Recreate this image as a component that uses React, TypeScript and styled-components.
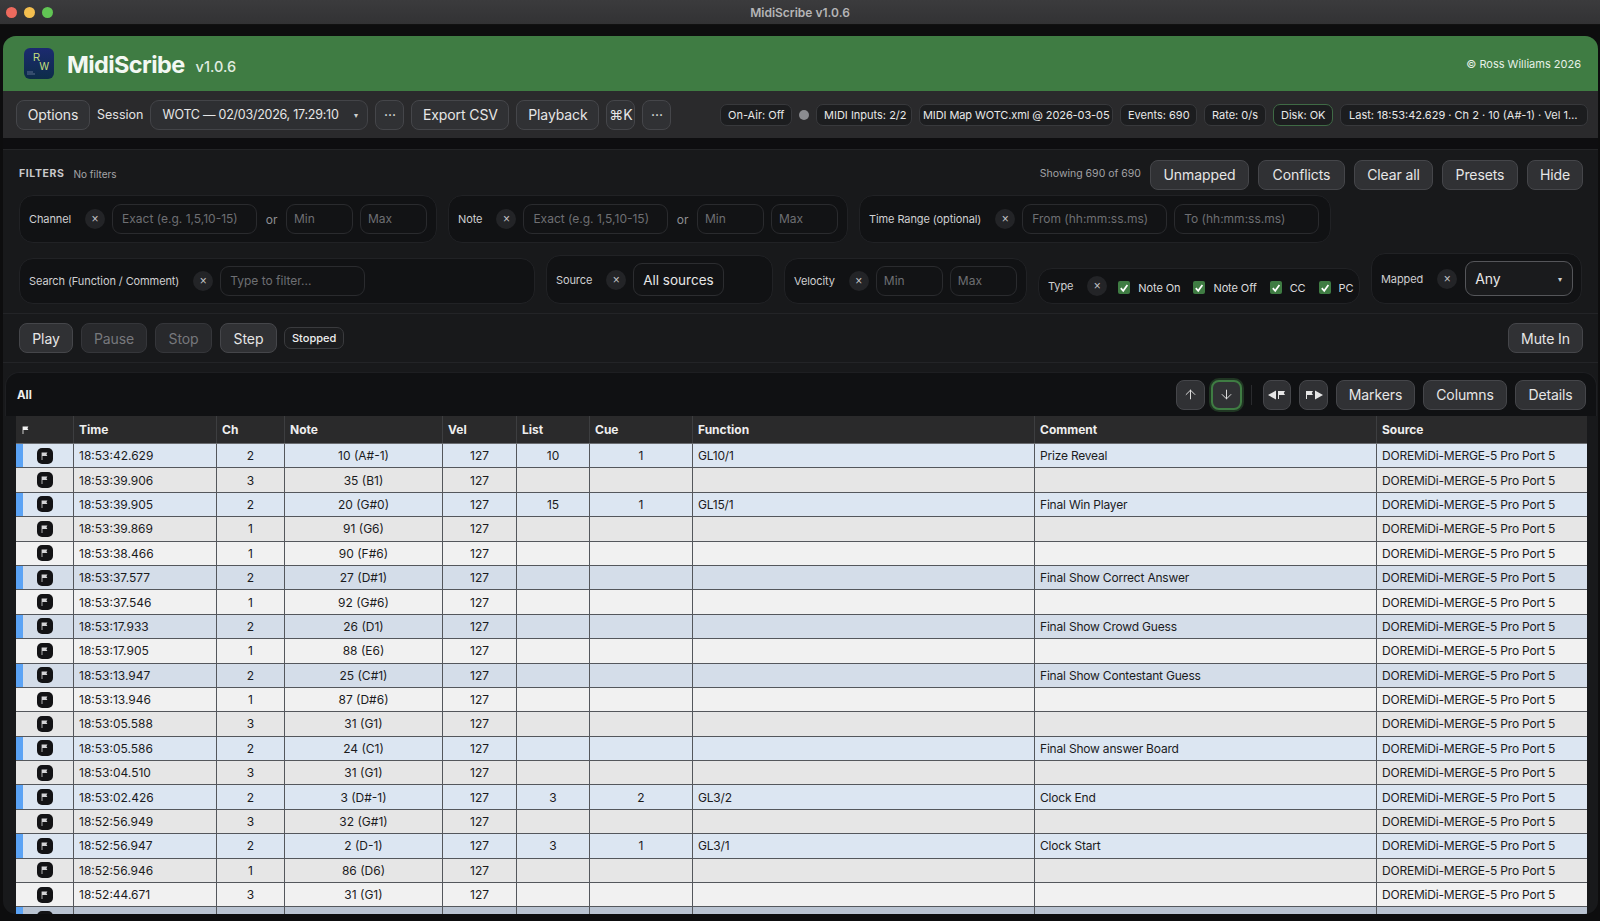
import { ArrowDown, ArrowUp } from "lucide-react";
import styled, { createGlobalStyle } from "styled-components";

type Tone = "blue" | "deep" | "grey" | "light" | "dim";

interface MidiRow {
  time: string;
  ch: number;
  note: string;
  list?: number;
  cue?: number;
  fn?: string;
  comment?: string;
  tone: Tone;
  mapped?: boolean;
}

const rows: MidiRow[] = [
  { time: "18:53:42.629", ch: 2, note: "10 (A#-1)", list: 10, cue: 1, fn: "GL10/1", comment: "Prize Reveal", tone: "blue", mapped: true },
  { time: "18:53:39.906", ch: 3, note: "35 (B1)", tone: "grey" },
  { time: "18:53:39.905", ch: 2, note: "20 (G#0)", list: 15, cue: 1, fn: "GL15/1", comment: "Final Win Player", tone: "blue", mapped: true },
  { time: "18:53:39.869", ch: 1, note: "91 (G6)", tone: "grey" },
  { time: "18:53:38.466", ch: 1, note: "90 (F#6)", tone: "light" },
  { time: "18:53:37.577", ch: 2, note: "27 (D#1)", comment: "Final Show Correct Answer", tone: "deep", mapped: true },
  { time: "18:53:37.546", ch: 1, note: "92 (G#6)", tone: "light" },
  { time: "18:53:17.933", ch: 2, note: "26 (D1)", comment: "Final Show Crowd Guess", tone: "deep", mapped: true },
  { time: "18:53:17.905", ch: 1, note: "88 (E6)", tone: "light" },
  { time: "18:53:13.947", ch: 2, note: "25 (C#1)", comment: "Final Show Contestant Guess", tone: "deep", mapped: true },
  { time: "18:53:13.946", ch: 1, note: "87 (D#6)", tone: "light" },
  { time: "18:53:05.588", ch: 3, note: "31 (G1)", tone: "grey" },
  { time: "18:53:05.586", ch: 2, note: "24 (C1)", comment: "Final Show answer Board", tone: "blue", mapped: true },
  { time: "18:53:04.510", ch: 3, note: "31 (G1)", tone: "grey" },
  { time: "18:53:02.426", ch: 2, note: "3 (D#-1)", list: 3, cue: 2, fn: "GL3/2", comment: "Clock End", tone: "blue", mapped: true },
  { time: "18:52:56.949", ch: 3, note: "32 (G#1)", tone: "grey" },
  { time: "18:52:56.947", ch: 2, note: "2 (D-1)", list: 3, cue: 1, fn: "GL3/1", comment: "Clock Start", tone: "blue", mapped: true },
  { time: "18:52:56.946", ch: 1, note: "86 (D6)", tone: "grey" },
  { time: "18:52:44.671", ch: 3, note: "31 (G1)", tone: "light" },
];

const toneColors: Record<Tone, string> = {
  blue: "#dce6f2",
  deep: "#d4dde9",
  grey: "#e6e6e6",
  light: "#f1f1f1",
  dim: "#b9c3d1",
};

const GlobalStyle = createGlobalStyle`
  html, body {
    margin: 0;
    padding: 0;
    background: #0d0d0e;
  }
  * {
    box-sizing: border-box;
  }
  body {
    font-family: Inter, "Liberation Sans", sans-serif;
    color: #e8e8e8;
  }
`;

const Window = styled.div`
  width: 1600px;
  height: 921px;
  overflow: hidden;
  display: flex;
  flex-direction: column;
  background: #0d0d0e;
`;

const TitleBar = styled.div`
  height: 25px;
  flex: none;
  display: flex;
  align-items: center;
  padding-left: 6px;
  background: linear-gradient(#3b3b3d, #323234);
  border-bottom: 1px solid #111;
`;

const Lights = styled.div`
  display: flex;
  gap: 7px;
  width: 52px;
`;

const Light = styled.span<{ $color: string }>`
  width: 11px;
  height: 11px;
  border-radius: 50%;
  background: ${(p) => p.$color};
`;

const WindowTitle = styled.div`
  flex: 1;
  margin-right: 58px;
  text-align: center;
  font-size: 12px;
  font-weight: 600;
  color: #b4b4b6;
`;

const Shell = styled.div`
  margin: 11px 2px 7px 3px;
  flex: 1;
  min-height: 0;
  display: flex;
  flex-direction: column;
  border-radius: 13px;
  overflow: hidden;
  background: #18191b;
`;

const Brand = styled.header`
  height: 55px;
  flex: none;
  display: flex;
  align-items: center;
  padding: 0 17px 0 21px;
  background: #3f7c43;
`;

const BrandName = styled.h1`
  margin: 2px 0 0 13px;
  font-size: 23.5px;
  font-weight: 700;
  letter-spacing: -0.6px;
  color: #f3f8f3;
`;

const BrandVersion = styled.span`
  margin: 5px 0 0 11px;
  font-size: 14.5px;
  font-weight: 500;
  color: #e0ece0;
`;

const Copyright = styled.span`
  margin-left: auto;
  font-size: 11px;
  color: #e6f0e6;
`;

const Toolbar = styled.div`
  height: 47px;
  flex: none;
  display: flex;
  align-items: center;
  gap: 7px;
  padding: 0 10px 0 13px;
  background: #2a2a2c;
`;

const Button = styled.button<{ $w: number; $muted?: boolean }>`
  width: ${(p) => p.$w}px;
  height: 30px;
  flex: none;
  display: inline-flex;
  align-items: center;
  justify-content: center;
  padding: 0;
  border-radius: 8px;
  border: 1px solid ${(p) => (p.$muted ? "#35363a" : "#45464a")};
  background: ${(p) => (p.$muted ? "#28292c" : "#303134")};
  color: ${(p) => (p.$muted ? "#77787c" : "#e6e6e6")};
  font-family: inherit;
  font-size: 14px;
  letter-spacing: -0.1px;
`;

const WatchButton = styled(Button)`
  margin-left: -2px;
  border: 2px solid #3f7c43;
  box-shadow: 0 0 0 2px rgba(63, 124, 67, 0.35);
`;

const SessionLabel = styled.span`
  font-size: 12.5px;
  color: #e2e2e2;
`;

const SelectBox = styled.div<{ $w: number; $h: number; $strong?: boolean }>`
  width: ${(p) => p.$w}px;
  height: ${(p) => p.$h}px;
  flex: none;
  display: flex;
  align-items: center;
  justify-content: space-between;
  margin-left: ${(p) => (p.$strong ? 1 : 0)}px;
  padding: 0 10px 0 9px;
  white-space: nowrap;
  border-radius: 9px;
  border: 1px solid ${(p) => (p.$strong ? "#55565a" : "#2c2d30")};
  background: ${(p) => (p.$strong ? "#1a1b1d" : "#121315")};
  color: #e6e6e6;
  font-size: ${(p) => (p.$strong ? 14 : 13.5)}px;
`;

const SessionSelect = styled(SelectBox)`
  background: #2e2f32;
  border-color: #434448;
  font-size: 12.5px;
  letter-spacing: -0.25px;
  padding-left: 11px;
`;

const Caret = styled.span`
  font-size: 8px;
  color: #cfcfcf;
`;

const Statuses = styled.div`
  margin-left: auto;
  display: flex;
  align-items: center;
  gap: 7px;
`;

const Pill = styled.span<{ $w: number; $ok?: boolean }>`
  width: ${(p) => p.$w}px;
  height: 22px;
  flex: none;
  display: block;
  padding: 0 7px;
  line-height: 20px;
  text-align: center;
  white-space: nowrap;
  overflow: hidden;
  border-radius: 7px;
  border: 1px solid ${(p) => (p.$ok ? "#3f6a45" : "#38393c")};
  background: #1c1d1f;
  font-size: 11px;
  color: #e8e8e8;
`;

const MapPill = styled(Pill)`
  padding: 0 3px;
  text-align: left;
  letter-spacing: -0.1px;
`;

const LastPill = styled(Pill)`
  padding: 0 8px;
  text-overflow: ellipsis;
`;

const StatusDot = styled.span`
  width: 10px;
  height: 10px;
  border-radius: 50%;
  background: #8b8c90;
`;

const Gap = styled.div`
  height: 12px;
  flex: none;
  background: #0e0e10;
  border-bottom: 1px solid #242527;
`;

const Filters = styled.section`
  flex: none;
  padding: 10px 15px 9px 16px;
  border-bottom: 1px solid #232427;
`;

const FilterHead = styled.div`
  display: flex;
  align-items: center;
  gap: 9px;
  height: 29px;
`;

const FilterTitle = styled.span`
  margin-bottom: 2px;
  font-size: 10.5px;
  font-weight: 700;
  letter-spacing: 0.6px;
  color: #c9c9cb;
`;

const FilterNote = styled.span`
  margin-bottom: 2px;
  font-size: 10px;
  color: #a5a5a8;
`;

const Showing = styled.span`
  margin: 0 0 2px auto;
  font-size: 10.5px;
  color: #a2a2a5;
`;

const FilterRow = styled.div`
  display: flex;
  align-items: flex-end;
  gap: 11px;
  margin-top: 6px;
`;

const Group = styled.div<{ $w: number }>`
  width: ${(p) => p.$w}px;
  display: flex;
  align-items: center;
  gap: 7px;
  padding: 8px 9px;
  border-radius: 14px;
  border: 1px solid #212225;
  background: #111214;
`;

const SecondRow = styled(FilterRow)`
  margin-top: 10px;
  ${Group} {
    padding: 7px 9px;
  }
`;

const GroupLabel = styled.span`
  margin-right: 7px;
  white-space: nowrap;
  font-size: 11px;
  letter-spacing: -0.1px;
  color: #cfcfd1;
`;

const Clear = styled.button`
  width: 20px;
  height: 20px;
  flex: none;
  padding: 0;
  border: none;
  border-radius: 50%;
  background: #232427;
  color: #c5c5c7;
  font-size: 12px;
  line-height: 20px;
`;

const Field = styled.input<{ $w: number }>`
  width: ${(p) => p.$w}px;
  height: 30px;
  flex: none;
  padding: 0 9px 2px;
  border-radius: 9px;
  border: 1px solid #2a2b2e;
  background: #121315;
  color: #e6e6e6;
  font-family: inherit;
  font-size: 12px;
  &::placeholder {
    color: #6e6f73;
  }
`;

const RangeField = styled(Field)`
  padding-left: 7px;
`;

const Or = styled.span`
  width: 15px;
  text-align: center;
  font-size: 12px;
  color: #8f8f93;
`;

const CheckItem = styled.label`
  display: flex;
  align-items: center;
  gap: 8px;
  margin: 3px 2px 0 4px;
  white-space: nowrap;
  font-size: 11px;
  letter-spacing: -0.1px;
  color: #dcdcde;
`;

const CheckBox = styled.span`
  width: 12px;
  height: 13px;
  display: flex;
  align-items: center;
  justify-content: center;
  border-radius: 2px;
  background: #3f7c43;
`;

const Transport = styled.div`
  height: 49px;
  flex: none;
  display: flex;
  align-items: center;
  gap: 8px;
  padding: 0 15px 0 16px;
  border-bottom: 1px solid #232427;
`;

const Stopped = styled.span`
  height: 22px;
  padding: 0 7px;
  display: flex;
  align-items: center;
  margin-left: -1px;
  border-radius: 7px;
  border: 1px solid #3a3b3e;
  background: #1c1d1f;
  font-size: 11px;
  font-weight: 500;
  color: #eee;
`;

const MuteButton = styled(Button)`
  margin-left: auto;
`;

const TableBar = styled.div`
  height: 44px;
  flex: none;
  display: flex;
  align-items: center;
  gap: 8px;
  margin: 9px 1px 0 2px;
  padding: 0 10px 0 11px;
  border-radius: 14px 14px 0 0;
  border: 1px solid #1e1f22;
  border-bottom: none;
  background: #101113;
`;

const TableTitle = styled.span`
  margin-right: auto;
  font-size: 11.5px;
  font-weight: 700;
  color: #eee;
`;

const Divider = styled.span`
  width: 1px;
  height: 20px;
  margin: 0 3px 0 1px;
  background: #2a2b2e;
`;

const TableWrap = styled.div`
  flex: 1;
  min-height: 0;
  margin: 0 11px 0 13px;
  overflow: hidden;
`;

const grid = "57px 143px 68px 158px 74px 73px 103px 342px 342px 211px";

const HeadRow = styled.div`
  height: 28px;
  display: grid;
  grid-template-columns: ${grid};
  background: #2a2a2b;
  border-bottom: 1px solid #6a6c70;
`;

const HeadCell = styled.div`
  display: flex;
  align-items: center;
  padding-left: 5px;
  border-left: 1px solid #3d3e40;
  font-size: 12px;
  font-weight: 700;
  color: #eee;
  &:first-child {
    border-left: none;
    padding-left: 6px;
  }
`;

const Row = styled.div<{ $tone: Tone }>`
  height: 24.4px;
  display: grid;
  grid-template-columns: ${grid};
  background: ${(p) => toneColors[p.$tone]};
  border-bottom: 1px solid #54575c;
`;

const Cell = styled.div<{ $center?: boolean }>`
  display: flex;
  align-items: center;
  justify-content: ${(p) => (p.$center ? "center" : "flex-start")};
  padding-left: ${(p) => (p.$center ? 0 : 5)}px;
  border-left: 1px solid #54575c;
  white-space: nowrap;
  overflow: hidden;
  font-size: 12px;
  color: #1b1b1d;
`;

const TextCell = styled(Cell)`
  letter-spacing: -0.2px;
`;

const FlagCell = styled.div<{ $mapped?: boolean }>`
  display: flex;
  align-items: center;
  justify-content: center;
  border-left: 7px solid ${(p) => (p.$mapped ? "#5ba3f5" : "transparent")};
  padding-right: 7px;
`;

const FlagButton = styled.span`
  width: 16px;
  height: 16px;
  display: flex;
  align-items: center;
  justify-content: center;
  border-radius: 5px;
  background: #131315;
`;

function Logo() {
  return (
    <svg width="30" height="31" viewBox="0 0 30 31">
      <defs>
        <linearGradient id="logo-bg" x1="0" y1="0" x2="0" y2="1">
          <stop offset="0" stopColor="#1c2a70" />
          <stop offset="1" stopColor="#0c2c48" />
        </linearGradient>
      </defs>
      <rect width="30" height="31" rx="6" fill="url(#logo-bg)" />
      <text x="9" y="13" fontFamily="Liberation Sans" fontSize="10" fill="#c8e07e">
        R
      </text>
      <text x="15.5" y="22" fontFamily="Liberation Sans" fontSize="10" fill="#c8e07e">
        W
      </text>
      <path d="M3 24h6M3 26h8" stroke="#7d8aa8" strokeWidth="0.7" />
    </svg>
  );
}

function Flag({ color = "#d4d4d6" }: { color?: string }) {
  return (
    <svg width="7" height="8" viewBox="0 0 7 8">
      <path d="M0.6 0.4h5.8l-1 1.8 1 1.9H1.4V8H0.6z" fill={color} />
    </svg>
  );
}

function MarkerJump({ back }: { back?: boolean }) {
  return (
    <svg width="20" height="12" viewBox="0 0 20 12" fill="#e6e6e6">
      {back ? (
        <path d="M9 1.5v9L1 6zM11 2h7l-1.2 2 1.2 2h-6v4h-1z" />
      ) : (
        <path d="M2 2h7L7.8 4 9 6H3v4H2zM11 1.5l8 4.5-8 4.5z" />
      )}
    </svg>
  );
}

function Check() {
  return (
    <svg width="10" height="10" viewBox="0 0 10 10">
      <path d="M1.8 5.2 4.2 7.8 8.4 2" fill="none" stroke="#fff" strokeWidth="1.7" />
    </svg>
  );
}

function App() {
  return (
    <Window>
      <GlobalStyle />
      <TitleBar>
        <Lights>
          <Light $color="#ed6a5e" />
          <Light $color="#f4bf4f" />
          <Light $color="#61c554" />
        </Lights>
        <WindowTitle>MidiScribe v1.0.6</WindowTitle>
      </TitleBar>
      <Shell>
        <Brand>
          <Logo />
          <BrandName>MidiScribe</BrandName>
          <BrandVersion>v1.0.6</BrandVersion>
          <Copyright>© Ross Williams 2026</Copyright>
        </Brand>
        <Toolbar>
          <Button $w={74}>Options</Button>
          <SessionLabel>Session</SessionLabel>
          <SessionSelect $w={218} $h={30}>
            WOTC — 02/03/2026, 17:29:10 <Caret>▾</Caret>
          </SessionSelect>
          <Button $w={29}>···</Button>
          <Button $w={98}>Export CSV</Button>
          <Button $w={83}>Playback</Button>
          <Button $w={29}>⌘K</Button>
          <Button $w={29}>···</Button>
          <Statuses>
            <Pill $w={72}>On-Air: Off</Pill>
            <StatusDot />
            <Pill $w={96}>MIDI Inputs: 2/2</Pill>
            <MapPill $w={194}>MIDI Map WOTC.xml @ 2026-03-05 1</MapPill>
            <Pill $w={77}>Events: 690</Pill>
            <Pill $w={62}>Rate: 0/s</Pill>
            <Pill $w={60} $ok>
              Disk: OK
            </Pill>
            <LastPill $w={248}>Last: 18:53:42.629 · Ch 2 · 10 (A#-1) · Vel 127</LastPill>
          </Statuses>
        </Toolbar>
        <Gap />
        <Filters>
          <FilterHead>
            <FilterTitle>FILTERS</FilterTitle>
            <FilterNote>No filters</FilterNote>
            <Showing>Showing 690 of 690</Showing>
            <Button $w={99}>Unmapped</Button>
            <Button $w={87}>Conflicts</Button>
            <Button $w={79}>Clear all</Button>
            <Button $w={76}>Presets</Button>
            <Button $w={56}>Hide</Button>
          </FilterHead>
          <FilterRow>
            <Group $w={418}>
              <GroupLabel>Channel</GroupLabel>
              <Clear>×</Clear>
              <Field $w={145} placeholder="Exact (e.g. 1,5,10-15)" />
              <Or>or</Or>
              <RangeField $w={67} placeholder="Min" />
              <RangeField $w={67} placeholder="Max" />
            </Group>
            <Group $w={400}>
              <GroupLabel>Note</GroupLabel>
              <Clear>×</Clear>
              <Field $w={145} placeholder="Exact (e.g. 1,5,10-15)" />
              <Or>or</Or>
              <RangeField $w={67} placeholder="Min" />
              <RangeField $w={67} placeholder="Max" />
            </Group>
            <Group $w={472}>
              <GroupLabel>Time Range (optional)</GroupLabel>
              <Clear>×</Clear>
              <Field $w={145} placeholder="From (hh:mm:ss.ms)" />
              <Field $w={145} placeholder="To (hh:mm:ss.ms)" />
            </Group>
          </FilterRow>
          <SecondRow>
            <Group $w={516}>
              <GroupLabel>Search (Function / Comment)</GroupLabel>
              <Clear>×</Clear>
              <Field $w={145} placeholder="Type to filter..." />
            </Group>
            <Group $w={227}>
              <GroupLabel>Source</GroupLabel>
              <Clear>×</Clear>
              <SelectBox $w={91} $h={33}>
                All sources
              </SelectBox>
            </Group>
            <Group $w={243}>
              <GroupLabel>Velocity</GroupLabel>
              <Clear>×</Clear>
              <RangeField $w={67} placeholder="Min" />
              <RangeField $w={67} placeholder="Max" />
            </Group>
            <Group $w={322}>
              <GroupLabel>Type</GroupLabel>
              <Clear>×</Clear>
              {["Note On", "Note Off", "CC", "PC"].map((t) => (
                <CheckItem key={t}>
                  <CheckBox>
                    <Check />
                  </CheckBox>
                  {t}
                </CheckItem>
              ))}
            </Group>
            <Group $w={211}>
              <GroupLabel>Mapped</GroupLabel>
              <Clear>×</Clear>
              <SelectBox $w={108} $h={35} $strong>
                Any <Caret>▾</Caret>
              </SelectBox>
            </Group>
          </SecondRow>
        </Filters>
        <Transport>
          <Button $w={54}>Play</Button>
          <Button $w={66} $muted>
            Pause
          </Button>
          <Button $w={57} $muted>
            Stop
          </Button>
          <Button $w={57}>Step</Button>
          <Stopped>Stopped</Stopped>
          <MuteButton $w={75}>Mute In</MuteButton>
        </Transport>
        <TableBar>
          <TableTitle>All</TableTitle>
          <Button $w={29}>
            <ArrowUp size={15} strokeWidth={1.5} />
          </Button>
          <WatchButton $w={31}>
            <ArrowDown size={15} strokeWidth={1.5} />
          </WatchButton>
          <Divider />
          <Button $w={28}>
            <MarkerJump back />
          </Button>
          <Button $w={29}>
            <MarkerJump />
          </Button>
          <Button $w={79}>Markers</Button>
          <Button $w={84}>Columns</Button>
          <Button $w={71}>Details</Button>
        </TableBar>
        <TableWrap>
          <HeadRow>
            <HeadCell>
              <Flag color="#f2f2f2" />
            </HeadCell>
            <HeadCell>Time</HeadCell>
            <HeadCell>Ch</HeadCell>
            <HeadCell>Note</HeadCell>
            <HeadCell>Vel</HeadCell>
            <HeadCell>List</HeadCell>
            <HeadCell>Cue</HeadCell>
            <HeadCell>Function</HeadCell>
            <HeadCell>Comment</HeadCell>
            <HeadCell>Source</HeadCell>
          </HeadRow>
          {rows.map((r) => (
            <Row key={r.time} $tone={r.tone}>
              <FlagCell $mapped={r.mapped}>
                <FlagButton>
                  <Flag />
                </FlagButton>
              </FlagCell>
              <Cell>{r.time}</Cell>
              <Cell $center>{r.ch}</Cell>
              <Cell $center>{r.note}</Cell>
              <Cell $center>127</Cell>
              <Cell $center>{r.list}</Cell>
              <Cell $center>{r.cue}</Cell>
              <TextCell>{r.fn}</TextCell>
              <TextCell>{r.comment}</TextCell>
              <TextCell>DOREMiDi-MERGE-5 Pro Port 5</TextCell>
            </Row>
          ))}
          <Row $tone="dim">
            <FlagCell $mapped>
              <FlagButton />
            </FlagCell>
            <Cell />
            <Cell />
            <Cell />
            <Cell />
            <Cell />
            <Cell />
            <Cell />
            <Cell />
            <Cell />
          </Row>
        </TableWrap>
      </Shell>
    </Window>
  );
}

export default App;
